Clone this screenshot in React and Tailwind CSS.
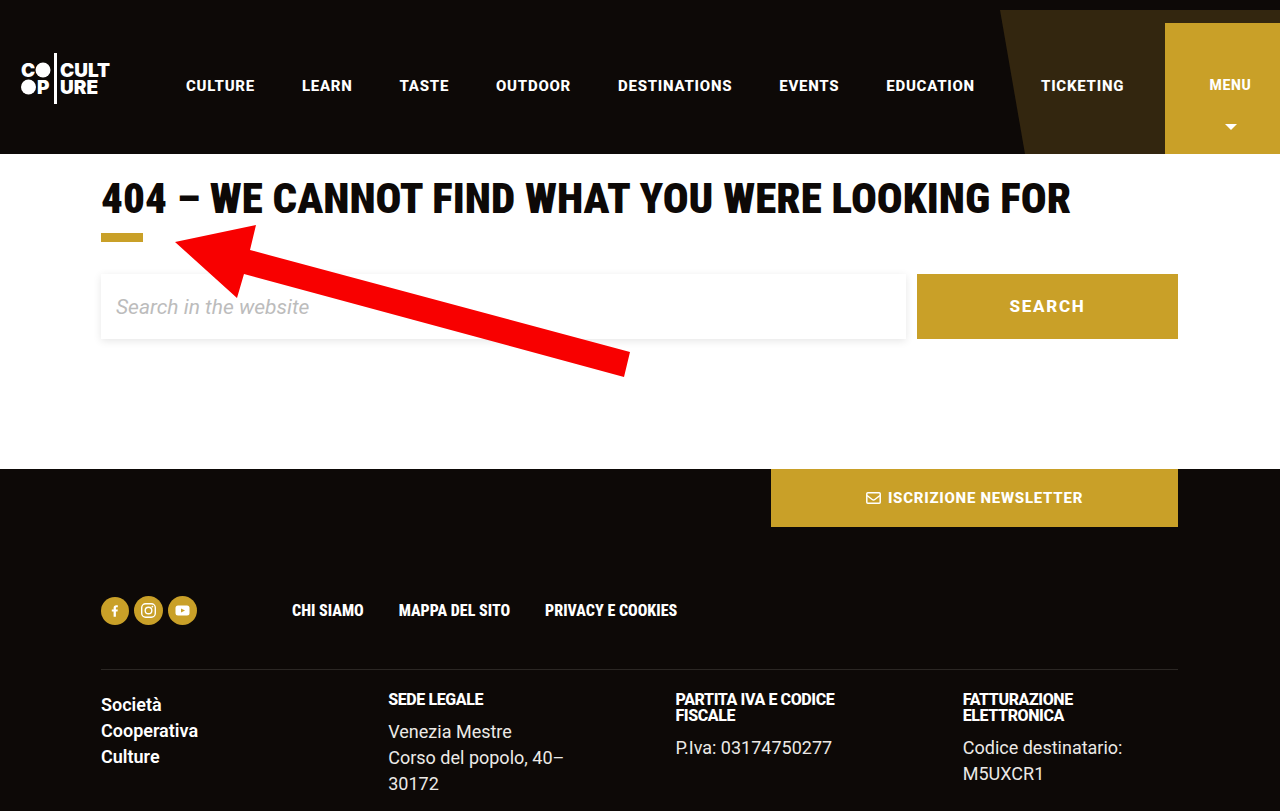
import { useState } from 'react'

const NAV = ['Culture', 'Learn', 'Taste', 'Outdoor', 'Destinations', 'Events', 'Education']
const FOOTER_LINKS = ['Chi siamo', 'Mappa del sito', 'Privacy e cookies']
const COLUMNS = [
  { title: 'Sede legale', lines: ['Venezia Mestre', 'Corso del popolo, 40–', '30172'] },
  { title: 'Partita IVA e codice fiscale', lines: ['P.Iva: 03174750277'] },
  { title: 'Fatturazione elettronica', lines: ['Codice destinatario:', 'M5UXCR1'] },
]

function Logo() {
  return (
    <svg
      viewBox="0 0 92 52"
      className="h-[52px] w-[92px] font-['Inter',sans-serif] text-[19px] font-black"
      fill="#fff"
      role="img"
      aria-label="CoopCulture"
    >
      <circle cx="22" cy="17" r="7.500" />
      <circle cx="7.500" cy="34" r="7.500" />
      <rect x="33" y="0" width="3" height="51" />
      <text>
        <tspan x="0" y="24">C</tspan>
        <tspan x="39" y="24">CULT</tspan>
        <tspan x="16" y="41">P</tspan>
        <tspan x="39" y="41">URE</tspan>
      </text>
    </svg>
  )
}

function Header() {
  return (
    <header className="flex h-[154px] bg-[#0d0907] pl-[21px] text-white">
      <a href="#home" className="mt-[53px] shrink-0 self-start">
        <Logo />
      </a>
      <nav className="mt-[76px] ml-[73px] flex flex-1 justify-between self-start text-[15px] leading-5 font-extrabold tracking-wider uppercase">
        {NAV.map((item) => (
          <a key={item} href={`#${item.toLowerCase()}`}>
            {item}
          </a>
        ))}
      </nav>
      <div className="mt-[10px] ml-[25px] flex w-[280px] shrink-0 bg-[#33260f] [clip-path:polygon(0_0,100%_0,100%_100%,25px_100%)]">
        <a
          href="#ticketing"
          className="mt-[66px] flex-1 self-start pl-[41px] text-[15px] leading-5 font-extrabold tracking-wider uppercase"
        >
          Ticketing
        </a>
        <button
          type="button"
          className="mt-[13px] flex w-[115px] flex-col items-center bg-[#c9a028] pt-[52px] pl-4 text-[14px] leading-5 font-extrabold tracking-wider uppercase"
        >
          Menu
          <svg viewBox="0 0 12 6" className="mt-[29px] h-[6px] w-3" fill="#fff" aria-hidden="true">
            <path d="M0 0h12L6 6z" />
          </svg>
        </button>
      </div>
    </header>
  )
}

function SearchForm() {
  const [query, setQuery] = useState('')

  return (
    <form className="mt-8 flex gap-[11px]" onSubmit={(e) => e.preventDefault()}>
      <input
        type="search"
        value={query}
        onChange={(e) => setQuery(e.target.value)}
        placeholder="Search in the website"
        aria-label="Search in the website"
        className="h-[65px] min-w-0 flex-1 bg-white px-[15px] text-[21px] italic shadow-[0_2px_8px_rgba(0,0,0,0.1)] outline-none placeholder:text-[#bcbcbc]"
      />
      <button
        type="submit"
        className="w-[261px] bg-[#c9a028] text-[17px] font-extrabold tracking-widest text-white uppercase"
      >
        Search
      </button>
    </form>
  )
}

function Arrow() {
  return (
    <svg
      viewBox="0 0 456 152"
      className="pointer-events-none absolute top-[71px] left-[175px] h-[152px] w-[456px]"
      fill="#f80000"
      aria-hidden="true"
    >
      <path d="M0 17 81 0 75 25 455 127 449 152 69 49 62 73z" />
    </svg>
  )
}

function Socials() {
  return (
    <div className="flex w-[191px] items-center gap-[5px]">
      <a href="#facebook" aria-label="Facebook">
        <svg viewBox="0 0 28 28" className="size-7">
          <circle cx="14" cy="14" r="14" fill="#c9a028" />
          <path
            d="M12.600 19.800v-5.200h-1.800v-2.200h1.800v-1.500c0-1.800 1-2.700 2.700-2.700h1.500v2.100h-1c-.7 0-.9.3-.9.9v1.200h1.900l-.3 2.200h-1.600v5.200z"
            fill="#fff"
          />
        </svg>
      </a>
      <a href="#instagram" aria-label="Instagram">
        <svg viewBox="0 0 29 29" className="size-[29px]" fill="none" stroke="#fff" strokeWidth="1.4">
          <circle cx="14.500" cy="14.500" r="14.500" fill="#c9a028" stroke="none" />
          <rect x="7.700" y="7.700" width="13.600" height="13.600" rx="4" />
          <circle cx="14.500" cy="14.500" r="3.300" />
          <circle cx="18.400" cy="10.600" r=".9" fill="#fff" stroke="none" />
        </svg>
      </a>
      <a href="#youtube" aria-label="YouTube">
        <svg viewBox="0 0 29 29" className="size-[29px]" fill="#c9a028">
          <circle cx="14.500" cy="14.500" r="14.500" />
          <rect x="7.500" y="9.500" width="14" height="10" rx="2.500" fill="#fff" />
          <path d="m13 12.500 4 2-4 2z" />
        </svg>
      </a>
    </div>
  )
}

function Footer() {
  return (
    <footer className="flex-1 bg-[#0d0907] pr-[102px] pb-3 pl-[101px] text-white">
      <a
        href="#newsletter"
        className="ml-auto flex h-[58px] w-[407px] items-center justify-center gap-[7px] bg-[#c9a028] text-[15px] font-extrabold tracking-wider uppercase"
      >
        <svg viewBox="0 0 15 12" className="h-3 w-[15px]" fill="none" stroke="#fff" strokeWidth="1.500" aria-hidden="true">
          <rect x=".8" y=".8" width="13.400" height="10.400" rx="1" />
          <path d="m1 3.500 5.200 4c.8.600 1.800.600 2.600 0l5.200-4" />
        </svg>
        Iscrizione newsletter
      </a>

      <div className="mt-[69px] flex items-center">
        <Socials />
        <nav className="flex gap-[35px] font-['Roboto_Condensed','Roboto',sans-serif] text-[16px] leading-5 font-extrabold uppercase">
          {FOOTER_LINKS.map((item) => (
            <a key={item} href="#footer">
              {item}
            </a>
          ))}
        </nav>
      </div>

      <div className="mt-[44px] grid grid-cols-4 gap-[72px] border-t border-[#2b2724] pt-[22px] text-[18px] leading-[26px]">
        <p className="font-semibold">
          Società
          <br />
          Cooperativa
          <br />
          Culture
        </p>
        {COLUMNS.map((col) => (
          <section key={col.title}>
            <h2 className="w-[170px] text-[16px] leading-4 font-extrabold tracking-tight uppercase">
              {col.title}
            </h2>
            <div className="mt-[11px] text-[#ece9e6]">
              {col.lines.map((line) => (
                <p key={line} className="whitespace-nowrap">
                  {line}
                </p>
              ))}
            </div>
          </section>
        ))}
      </div>
    </footer>
  )
}

export default function App() {
  return (
    <div className="flex min-h-screen flex-col bg-white font-['Roboto',sans-serif] text-[#0d0907]">
      <Header />
      <main className="relative h-[315px] pt-[21px] pr-[102px] pl-[101px]">
        <h1 className="font-['Roboto_Condensed','Roboto',sans-serif] text-[43px] leading-[46px] font-black whitespace-nowrap uppercase">
          404 – We cannot find what you were looking for
        </h1>
        <div className="mt-3 h-[9px] w-[42px] bg-[#c9a028]" />
        <SearchForm />
        <Arrow />
      </main>
      <Footer />
    </div>
  )
}
